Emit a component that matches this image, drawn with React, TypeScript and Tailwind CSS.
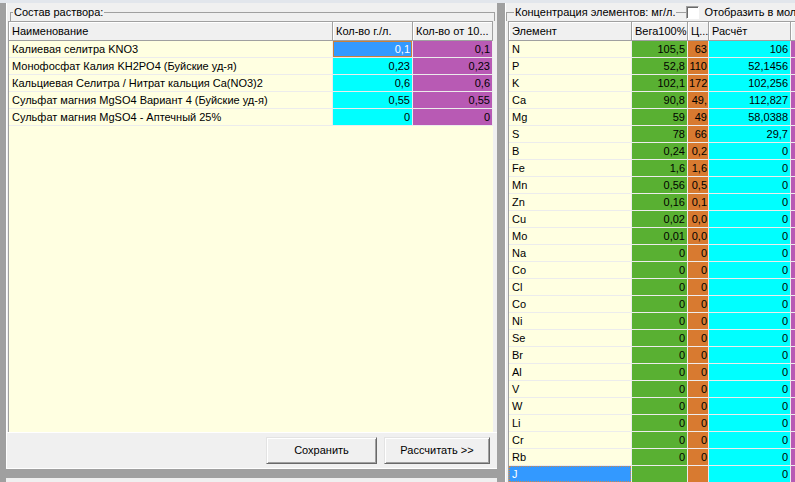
import React from 'react';

const mix = [
  { name: 'Калиевая селитра KNO3', g: '0,1', p: '0,1' },
  { name: 'Монофосфат Калия KH2PO4 (Буйские уд-я)', g: '0,23', p: '0,23' },
  { name: 'Кальциевая Селитра / Нитрат кальция Ca(NO3)2', g: '0,6', p: '0,6' },
  { name: 'Сульфат магния MgSO4 Вариант 4 (Буйские уд-я)', g: '0,55', p: '0,55' },
  { name: 'Сульфат магния MgSO4 - Аптечный 25%', g: '0', p: '0' },
];

// element, Вега100%, Ц..., Расчёт
const elements: [string, string, string, string][] = [
  ['N', '105,5', '63', '106'],
  ['P', '52,8', '110', '52,1456'],
  ['K', '102,1', '172', '102,256'],
  ['Ca', '90,8', '49,', '112,827'],
  ['Mg', '59', '49', '58,0388'],
  ['S', '78', '66', '29,7'],
  ['B', '0,24', '0,2', '0'],
  ['Fe', '1,6', '1,6', '0'],
  ['Mn', '0,56', '0,5', '0'],
  ['Zn', '0,16', '0,1', '0'],
  ['Cu', '0,02', '0,0', '0'],
  ['Mo', '0,01', '0,0', '0'],
  ['Na', '0', '0', '0'],
  ['Co', '0', '0', '0'],
  ['Cl', '0', '0', '0'],
  ['Co', '0', '0', '0'],
  ['Ni', '0', '0', '0'],
  ['Se', '0', '0', '0'],
  ['Br', '0', '0', '0'],
  ['Al', '0', '0', '0'],
  ['V', '0', '0', '0'],
  ['W', '0', '0', '0'],
  ['Li', '0', '0', '0'],
  ['Cr', '0', '0', '0'],
  ['Rb', '0', '0', '0'],
  ['J', '', '', '0'],
];

function Head({ w, children }: { w: string; children?: React.ReactNode }) {
  return (
    <div
      className={`${w} h-[19px] shrink-0 overflow-hidden whitespace-nowrap border-r border-b border-[#a0a0a0] bg-[#f0f0f0] pl-[3px] leading-[18px] shadow-[inset_1px_1px_0_#fff]`}
    >
      {children}
    </div>
  );
}

function Cell({ w, bg, children, left, tight }: { w: string; bg: string; children?: React.ReactNode; left?: boolean; tight?: boolean }) {
  return (
    <div
      className={`${w} ${bg} h-[17px] shrink-0 overflow-hidden whitespace-nowrap border-r border-b border-[#ececec] leading-[16px] ${
        left ? 'pl-[3px] text-left' : tight ? 'px-px text-right' : 'px-[2px] text-right'
      }`}
    >
      {children}
    </div>
  );
}

function Button({ w, children }: { w: string; children: React.ReactNode }) {
  return (
    <button
      className={`${w} h-[27px] border border-t-[#e3e3e3] border-l-[#e3e3e3] border-r-[#696969] border-b-[#696969] bg-[#f0f0f0] shadow-[inset_1px_1px_0_#fff,inset_-1px_-1px_0_#a0a0a0]`}
    >
      {children}
    </button>
  );
}

export default function App() {
  return (
    <div className="flex h-[482px] w-[795px] flex-col overflow-hidden bg-[#a0a0a0] font-['Liberation_Sans',Arial,sans-serif] text-[11px] text-black">
      {/* top strip */}
      <div className="h-[3px] shrink-0 bg-[#e2e6ec]" />

      <div className="flex min-h-0 flex-1">
        <div className="w-[6px] shrink-0" />

        {/* ─── Left: состав раствора ─── */}
        <div className="flex w-[491px] shrink-0 flex-col">
          <div className="flex h-[466px] flex-col border-l border-b border-white bg-[#f0f0f0]">
            <div className="flex h-[18px] items-center pl-[3px] pr-[2px]">
              <div className="h-[9px] w-[3px] self-end border-l border-t border-[#a0a0a0]" />
              <span className="px-px leading-[13px]">Состав раствора:</span>
              <div className="h-[9px] flex-1 self-end border-t border-r border-[#a0a0a0]" />
            </div>

            <div className="ml-px flex h-[411px] w-[485px] flex-col overflow-hidden border-l border-t border-[#a0a0a0] bg-[#ffffe1]">
              <div className="flex">
                <Head w="w-[324px]">Наименование</Head>
                <Head w="w-[80px]">Кол-во г./л.</Head>
                <Head w="w-[80px]">Кол-во от 10...</Head>
              </div>
              {mix.map((r, i) => (
                <div key={i} className="flex">
                  <Cell w="w-[324px]" bg="bg-[#ffffe1]" left>
                    {r.name}
                  </Cell>
                  {i === 0 ? (
                    <div className="h-[17px] w-[80px] shrink-0 border-b border-r border-[#ececec]">
                      <div className="h-[16px] border border-[#c8803c] bg-[#3399ff] px-px text-right leading-[14px] text-white">
                        {r.g}
                      </div>
                    </div>
                  ) : (
                    <Cell w="w-[80px]" bg="bg-[#00ffff]">
                      {r.g}
                    </Cell>
                  )}
                  <Cell w="w-[80px]" bg="bg-[#b85ab4]">
                    {r.p}
                  </Cell>
                </div>
              ))}
            </div>

            <div className="flex flex-1 justify-end gap-[7px] border-t border-white pr-[7px] pt-[4px]">
              <Button w="w-[111px]">Сохранить</Button>
              <Button w="w-[106px]">Рассчитать &gt;&gt;</Button>
            </div>
          </div>
          <div className="h-[9px] shrink-0" />
          <div className="flex-1 bg-[#f0f0f0]" />
        </div>

        <div className="w-[8px] shrink-0" />

        {/* ─── Right: концентрация элементов ─── */}
        <div className="flex min-w-0 flex-1 flex-col overflow-hidden border-l border-white bg-[#f0f0f0]">
          <div className="flex h-[18px] shrink-0 items-center whitespace-nowrap">
            <div className="h-[9px] w-[8px] shrink-0 self-end border-l border-t border-[#a0a0a0]" />
            <span className="px-px leading-[13px]">Концентрация элементов: мг/л.</span>
            <div className="h-0 w-[10px] shrink-0 border-t border-[#a0a0a0]" />
            <div className="h-[13px] w-[13px] shrink-0 border border-t-[#a0a0a0] border-l-[#a0a0a0] border-r-white border-b-white bg-white shadow-[inset_1px_1px_0_#696969]" />
            <span className="pl-[5px] leading-[13px]">Отобразить в молях</span>
          </div>

          <div className="ml-[2px] flex flex-1 flex-col border-l border-t border-[#a0a0a0]">
            <div className="flex">
              <Head w="w-[123px]">Элемент</Head>
              <Head w="w-[56px]">Вега100%</Head>
              <Head w="w-[21px]">Ц...</Head>
              <Head w="w-[82px]">Расчёт</Head>
              <Head w="w-[40px]" />
            </div>
            {elements.map((e, i) => {
              const last = i === elements.length - 1;
              return (
                <div key={i} className="flex">
                  {last ? (
                    <div className="h-[17px] w-[123px] shrink-0 border-b border-r border-[#ececec]">
                      <div className="h-[16px] border border-dotted border-[#d08848] bg-[#3399ff] pl-[2px] leading-[14px] text-white">
                        {e[0]}
                      </div>
                    </div>
                  ) : (
                    <Cell w="w-[123px]" bg="bg-[#ffffe1]" left>
                      {e[0]}
                    </Cell>
                  )}
                  <Cell w="w-[56px]" bg="bg-[#59b032]">
                    {e[1]}
                  </Cell>
                  <Cell w="w-[21px]" bg="bg-[#d87a30]" tight>
                    {e[2]}
                  </Cell>
                  <Cell w="w-[82px]" bg="bg-[#00ffff]">
                    {e[3]}
                  </Cell>
                  <Cell w="w-[40px]" bg="bg-[#b85ab4]" />
                </div>
              );
            })}
          </div>
        </div>
      </div>
    </div>
  );
}
